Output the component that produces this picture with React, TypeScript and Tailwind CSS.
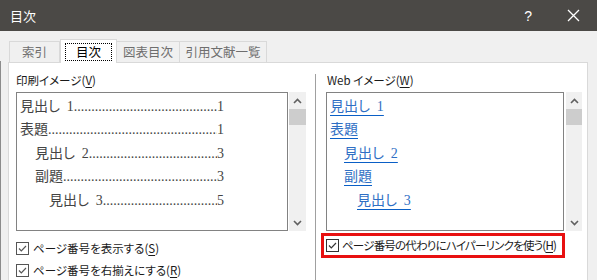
import React from "react";

const printRows = [
  { label: "見出し 1", page: "1", indent: "pl-[3px]" },
  { label: "表題", page: "1", indent: "pl-[3px]" },
  { label: "見出し 2", page: "3", indent: "pl-[18px]" },
  { label: "副題", page: "3", indent: "pl-[18px]" },
  { label: "見出し 3", page: "5", indent: "pl-[32px]" },
];

const webRows = [
  { label: "見出し 1", indent: "pl-[3px]" },
  { label: "表題", indent: "pl-[3px]" },
  { label: "見出し 2", indent: "pl-[17px]" },
  { label: "副題", indent: "pl-[17px]" },
  { label: "見出し 3", indent: "pl-[30px]" },
];

const tabs = [
  { label: "索引", w: "w-[51px]" },
  { label: "目次", w: "w-[57px]", active: true },
  { label: "図表目次", w: "w-[64px]" },
  { label: "引用文献一覧", w: "w-[88px]" },
];

function Chevron({ down }: { down?: boolean }) {
  return (
    <svg width="9" height="6" viewBox="0 0 9 6" className="text-[#606060]">
      <polyline
        points={down ? "1,1 4.5,4.5 8,1" : "1,5 4.5,1.5 8,5"}
        fill="none"
        stroke="currentColor"
        strokeWidth="1.6"
      />
    </svg>
  );
}

function ScrollBar({ w }: { w: string }) {
  return (
    <div className={`${w} h-[139px] bg-[#f0f0f0] flex flex-col items-center`}>
      <div className="h-[17px] flex items-center justify-center">
        <Chevron />
      </div>
      <div className="w-full h-[16px] bg-[#cdcdcd]" />
      <div className="flex-1" />
      <div className="h-[17px] flex items-center justify-center">
        <Chevron down />
      </div>
    </div>
  );
}

function Check({ dark }: { dark?: boolean }) {
  return (
    <div
      className={`w-[13px] h-[13px] border ${dark ? "border-[#333]" : "border-[#555]"} bg-white flex items-center justify-center shrink-0`}
    >
      <svg width="11" height="11" viewBox="0 0 11 11">
        <polyline
          points="2,5.5 4.3,7.8 9,3"
          fill="none"
          stroke={dark ? "#333" : "#555"}
          strokeWidth="1.2"
        />
      </svg>
    </div>
  );
}

function Key({ k }: { k: string }) {
  return (
    <>
      (<span className="underline underline-offset-2">{k}</span>)
    </>
  );
}

export default function App() {
  return (
    <div className="w-[597px] h-[280px] overflow-hidden bg-[#f0f0f0] font-['Noto_Sans_CJK_JP',sans-serif] [font-feature-settings:'palt'] text-[11.5px] text-[#1a1a1a]">
      {/* title bar */}
      <div className="h-[31px] bg-[#4b4946] flex items-center text-white">
        <span className="ml-[10px] text-[13px] leading-none">目次</span>
        <span className="ml-auto mr-[35px] text-[14px] leading-none font-['Liberation_Sans',sans-serif]">?</span>
        <svg width="13" height="13" viewBox="0 0 13 13" className="mr-[17px]">
          <path d="M1 1L12 12M12 1L1 12" stroke="#fff" strokeWidth="1.3" />
        </svg>
      </div>

      {/* tabs */}
      <div className="h-[31px] pl-[9px] flex items-end">
        {tabs.map((t) =>
          t.active ? (
            <div
              key={t.label}
              className={`${t.w} h-[24px] -mb-px relative z-10 bg-white border border-b-0 border-[#d9d9d9] flex items-start justify-center pt-[3px]`}
            >
              <div className="w-[47px] h-[18px] border border-dotted border-black flex items-center justify-center text-[12.5px] leading-none text-black">
                {t.label}
              </div>
            </div>
          ) : (
            <div
              key={t.label}
              className={`${t.w} h-[21px] border border-b-0 border-[#d9d9d9] -ml-px first:ml-0 flex items-center justify-center text-[12.5px] leading-none text-[#6e6e6e]`}
            >
              {t.label}
            </div>
          )
        )}
      </div>

      {/* panel */}
      <div className="flex h-[218px]">
        <div className="w-px bg-[#8c8c8c] mt-[-1px]" />
        <div className="ml-[7px] w-[580px] border border-b-0 border-[#d9d9d9] bg-white flex">
          {/* print preview */}
          <div className="ml-[7px] w-[290px] flex flex-col">
            <div className="h-[29px] pt-[9px] leading-[16px]">
              印刷イメージ<Key k="V" />
            </div>
            <div className="flex gap-px">
              <div className="w-[272px] h-[139px] border border-[#828282] pt-[2px] font-['Liberation_Serif','Noto_Sans_CJK_JP',serif] text-[14px] text-[#444]">
                {printRows.map((r) => (
                  <div key={r.label} className={`h-[23.5px] flex items-center ${r.indent} pr-[63px] leading-none`}>
                    <span className="whitespace-pre shrink-0">{r.label.replace(" ", "  ")}</span>
                    <span className="flex-1 min-w-0 overflow-hidden whitespace-nowrap">
                      ..........................................................................................
                    </span>
                    <span className="shrink-0">{r.page}</span>
                  </div>
                ))}
              </div>
              <ScrollBar w="w-[17px]" />
            </div>
            <div className="mt-[11px] flex items-center gap-[4px] h-[13px]">
              <Check />
              <span className="leading-none">
                ページ番号を表示する<Key k="S" />
              </span>
            </div>
            <div className="mt-[9px] flex items-center gap-[4px] h-[13px]">
              <Check />
              <span className="leading-none">
                ページ番号を右揃えにする<Key k="R" />
              </span>
            </div>
          </div>

          {/* separator */}
          <div className="ml-[9px] mt-[11px] w-px bg-[#a0a0a0]" />

          {/* web preview */}
          <div className="ml-[10px] w-[256px] flex flex-col">
            <div className="h-[29px] pt-[9px] leading-[16px] pl-px">
              Web イメージ<Key k="W" />
            </div>
            <div className="flex gap-[2px]">
              <div className="w-[238px] h-[139px] border border-[#828282] pt-[2px] font-['Liberation_Serif','Noto_Sans_CJK_JP',serif] text-[14px]">
                {webRows.map((r) => (
                  <div key={r.label} className={`h-[23.5px] flex items-center ${r.indent} leading-none`}>
                    <span className="whitespace-pre text-[#2f6fc4] underline decoration-[#0a5fc6] underline-offset-[4px]">
                      {r.label.replace(" ", "  ")}
                    </span>
                  </div>
                ))}
              </div>
              <ScrollBar w="w-[16px]" />
            </div>
            <div className="mt-[2px] -ml-[5px] w-[244px] h-[25px] border-[3px] border-[#e81010] flex items-center gap-[3px] pl-[2px]">
              <Check dark />
              <span className="leading-none whitespace-nowrap tracking-[-0.8px]">
                ページ番号の代わりにハイパーリンクを使う<Key k="H" />
              </span>
            </div>
          </div>
        </div>
      </div>
    </div>
  );
}
